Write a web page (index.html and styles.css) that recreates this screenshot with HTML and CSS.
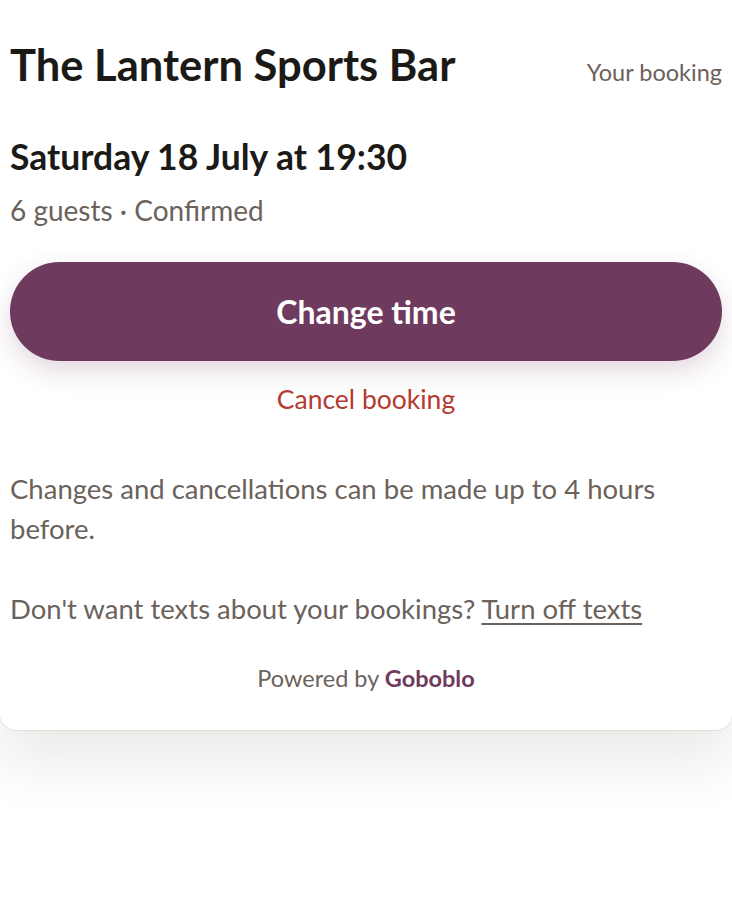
FILE: index.html
```html
<!DOCTYPE html>
<html>
<head>
<title>Your booking - The Lantern Sports Bar</title>
<link rel="stylesheet" href="styles.css">
</head>
<body>
<div class="card">
  <div class="card-header">
    <h1>The Lantern Sports Bar</h1>
    <span class="eyebrow">Your booking</span>
  </div>

  <h2 class="when">Saturday 18 July at 19:30</h2>
  <p class="meta">6 guests · Confirmed</p>

  <button class="primary-btn">Change time</button>
  <a class="cancel-link" href="#">Cancel booking</a>

  <p class="note">Changes and cancellations can be made up to 4 hours before.</p>
  <p class="note">Don't want texts about your bookings? <a href="#">Turn off texts</a></p>

  <div class="powered">Powered by <strong>Goboblo</strong></div>
</div>
</body>
</html>
```

FILE: styles.css
```css
html {
  background: #fff;
}
body {
  margin: 0;
  min-height: 900px;
  background: #fff;
  font-family: Lato, "Noto Sans", sans-serif;
  color: #6b625b;
}
.card {
  background: #fff;
  padding: 40px 10px 37px 10px;
  border-radius: 0 0 16px 16px;
  box-shadow: 0 1px 0 #e6ded4, 0 30px 60px rgba(30, 25, 20, 0.1);
}
.card-header {
  display: flex;
  justify-content: space-between;
  align-items: baseline;
}
.card-header h1 {
  margin: 0;
  font-size: 43.5px;
  line-height: 48px;
  font-weight: 700;
  color: #1c1a17;
}
.eyebrow {
  font-size: 23.5px;
  color: #6b625b;
}
.when {
  margin: 49px 0 0;
  font-size: 35.5px;
  line-height: 40px;
  font-weight: 700;
  color: #1c1a17;
}
.meta {
  margin: 15px 0 0;
  font-size: 28px;
  line-height: 36px;
}
.primary-btn {
  display: block;
  width: 100%;
  height: 99px;
  margin-top: 34px;
  border: none;
  border-radius: 50px;
  background: #6e3a5e;
  color: #fff;
  font-family: inherit;
  font-size: 32px;
  font-weight: 700;
  cursor: pointer;
  box-shadow: 0 10px 26px rgba(110, 58, 94, 0.2);
}
.cancel-link {
  display: block;
  margin-top: 21px;
  text-align: center;
  font-size: 26.5px;
  line-height: 34px;
  color: #b5392f;
  text-decoration: none;
}
.note {
  margin: 53px 0 0;
  font-size: 27.5px;
  line-height: 40px;
}
.note + .note {
  margin-top: 40px;
}
.note a {
  color: #6b625b;
  text-decoration: underline;
  text-decoration-thickness: 2px;
  text-underline-offset: 4px;
}
.powered {
  margin-top: 34px;
  text-align: center;
  font-size: 23.5px;
  line-height: 30px;
}
.powered strong {
  color: #6e3a5e;
}
```
